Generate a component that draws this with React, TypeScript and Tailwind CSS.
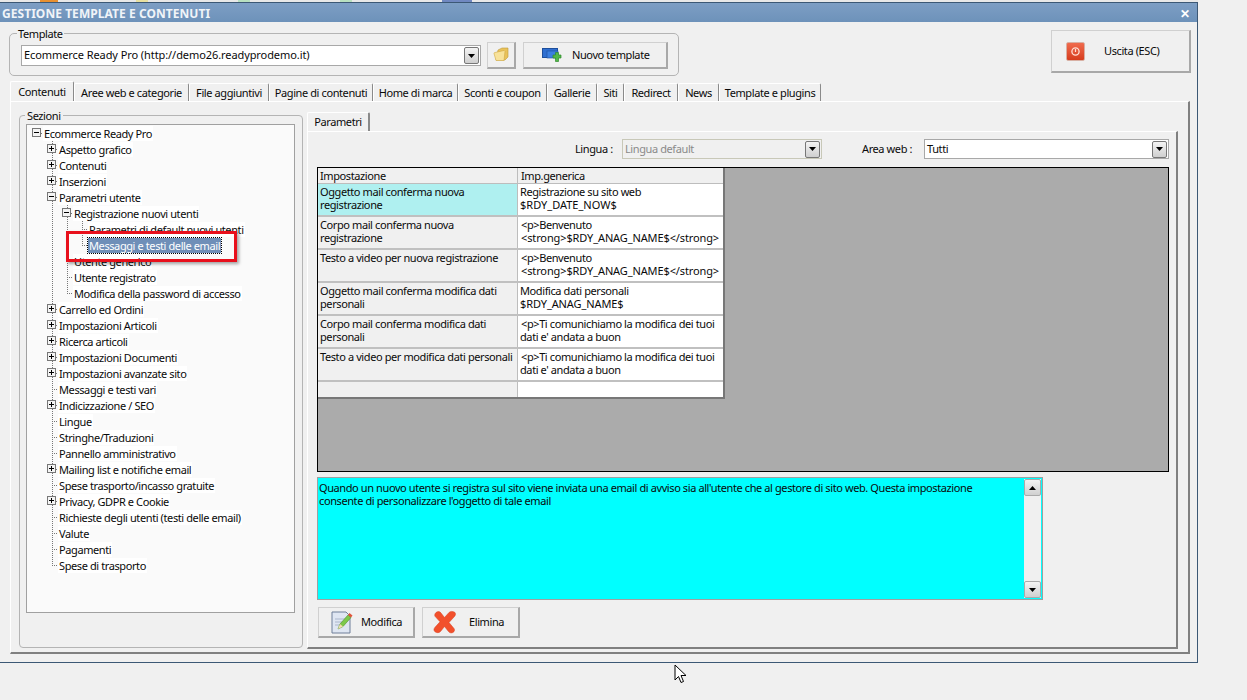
import React from 'react';

type Node = { label: string; lv: number; exp?: 'plus' | 'minus'; g: number[]; last?: boolean };

const rootGuide = [51];
const paramGuide = [51, 66];
const regGuide = [51, 66, 81];

const tree: Node[] = [
  { label: 'Ecommerce Ready Pro', lv: 0, exp: 'minus', g: [] },
  { label: 'Aspetto grafico', lv: 1, exp: 'plus', g: rootGuide },
  { label: 'Contenuti', lv: 1, exp: 'plus', g: rootGuide },
  { label: 'Inserzioni', lv: 1, exp: 'plus', g: rootGuide },
  { label: 'Parametri utente', lv: 1, exp: 'minus', g: rootGuide },
  { label: 'Registrazione nuovi utenti', lv: 2, exp: 'minus', g: paramGuide },
  { label: 'Parametri di default nuovi utenti', lv: 3, g: regGuide },
  { label: 'Messaggi e testi delle email', lv: 3, g: regGuide, last: true },
  { label: 'Utente generico', lv: 2, g: paramGuide },
  { label: 'Utente registrato', lv: 2, g: paramGuide },
  { label: 'Modifica della password di accesso', lv: 2, g: paramGuide, last: true },
  { label: 'Carrello ed Ordini', lv: 1, exp: 'plus', g: rootGuide },
  { label: 'Impostazioni Articoli', lv: 1, exp: 'plus', g: rootGuide },
  { label: 'Ricerca articoli', lv: 1, exp: 'plus', g: rootGuide },
  { label: 'Impostazioni Documenti', lv: 1, exp: 'plus', g: rootGuide },
  { label: 'Impostazioni avanzate sito', lv: 1, exp: 'plus', g: rootGuide },
  { label: 'Messaggi e testi vari', lv: 1, g: rootGuide },
  { label: 'Indicizzazione / SEO', lv: 1, exp: 'plus', g: rootGuide },
  { label: 'Lingue', lv: 1, g: rootGuide },
  { label: 'Stringhe/Traduzioni', lv: 1, g: rootGuide },
  { label: 'Pannello amministrativo', lv: 1, g: rootGuide },
  { label: 'Mailing list e notifiche email', lv: 1, exp: 'plus', g: rootGuide },
  { label: 'Spese trasporto/incasso gratuite', lv: 1, g: rootGuide },
  { label: 'Privacy, GDPR e Cookie', lv: 1, exp: 'plus', g: rootGuide },
  { label: 'Richieste degli utenti (testi delle email)', lv: 1, g: rootGuide },
  { label: 'Valute', lv: 1, g: rootGuide },
  { label: 'Pagamenti', lv: 1, g: rootGuide },
  { label: 'Spese di trasporto', lv: 1, g: rootGuide, last: true },
];

const tabs = [
  { label: 'Contenuti', w: 'w-[64px]' },
  { label: 'Aree web e categorie', w: 'w-[115px]' },
  { label: 'File aggiuntivi', w: 'w-[80px]' },
  { label: 'Pagine di contenuti', w: 'w-[104px]' },
  { label: 'Home di marca', w: 'w-[85px]' },
  { label: 'Sconti e coupon', w: 'w-[89px]' },
  { label: 'Gallerie', w: 'w-[50px]' },
  { label: 'Siti', w: 'w-[27px]' },
  { label: 'Redirect', w: 'w-[54px]' },
  { label: 'News', w: 'w-[41px]' },
  { label: 'Template e plugins', w: 'w-[102px]' },
];

const wideLine = 'tracking-[-0.12px]';

const rows: { a: string; b: React.ReactNode }[] = [
  {
    a: 'Oggetto mail conferma nuova registrazione',
    b: <>Registrazione su sito web<br /><span className="tracking-[0px]">$RDY_DATE_NOW$</span></>,
  },
  {
    a: 'Corpo mail conferma nuova registrazione',
    b: <><span className="ml-px">&lt;p&gt;Benvenuto</span><br /><span className={`ml-px ${wideLine}`}>&lt;strong&gt;$RDY_ANAG_NAME$&lt;/strong&gt;</span></>,
  },
  {
    a: 'Testo a video per nuova registrazione',
    b: <><span className="ml-px">&lt;p&gt;Benvenuto</span><br /><span className={`ml-px ${wideLine}`}>&lt;strong&gt;$RDY_ANAG_NAME$&lt;/strong&gt;</span></>,
  },
  {
    a: 'Oggetto mail conferma modifica dati personali',
    b: <>Modifica dati personali<br /><span className="tracking-[-0.1px]">$RDY_ANAG_NAME$</span></>,
  },
  {
    a: 'Corpo mail conferma modifica dati personali',
    b: <><span className="ml-px">&lt;p&gt;Ti comunichiamo la modifica dei tuoi</span><br />dati e' andata a buon</>,
  },
  {
    a: 'Testo a video per modifica dati personali',
    b: <><span className="ml-px">&lt;p&gt;Ti comunichiamo la modifica dei tuoi</span><br />dati e' andata a buon</>,
  },
];

function TreeRow({ node, index }: { node: Node; index: number }) {
  const textX = 16 + node.lv * 15;
  const boxX = 10 + node.lv * 15;
  // le guide sono in x di pagina, l'albero parte da x=26
  return (
    <div className="relative flex h-[16px] items-center">
      <svg width="110" height="16" className="absolute left-0 top-0">
        {index === 0 && <line x1="25.5" y1="8" x2="25.5" y2="16" stroke="#777" strokeDasharray="1 1" />}
        {node.g.map((x, i) => {
          const isOwn = i === node.g.length - 1;
          return (
            <line
              key={x}
              x1={x - 25.5}
              x2={x - 25.5}
              y1={0}
              y2={isOwn && node.last ? 8 : 16}
              stroke="#777"
              strokeDasharray="1 1"
            />
          );
        })}
        <line x1={boxX} x2={textX} y1="8.5" y2="8.5" stroke="#777" strokeDasharray="1 1" />
        {node.exp && (
          <g>
            <rect x={boxX - 4.5} y="3.5" width="8" height="8" fill="#f4f4f4" stroke="#777" />
            <line x1={boxX - 3} x2={boxX + 2} y1="7.5" y2="7.5" stroke="#000" />
            {node.exp === 'plus' && <line x1={boxX - 0.5} x2={boxX - 0.5} y1="5" y2="10" stroke="#000" />}
          </g>
        )}
      </svg>
      <span
        className={
          node.label === 'Messaggi e testi delle email'
            ? 'relative whitespace-nowrap bg-[#6f8fb8] px-px leading-[15px] text-white outline-1 outline-dotted outline-black'
            : 'relative whitespace-nowrap bg-white px-px leading-[15px] text-[#0a0a0a]'
        }
        style={{ marginLeft: textX }}
      >
        {node.label}
      </span>
    </div>
  );
}

function DropArrow() {
  return (
    <div className="flex h-[17px] w-[15px] items-center justify-center rounded-[2px] border border-[#777] bg-gradient-to-b from-[#f4f4f4] to-[#cfcfcf]">
      <svg width="7" height="4" viewBox="0 0 7 4">
        <path d="M0 0h7L3.5 4z" fill="#000" />
      </svg>
    </div>
  );
}

function Folder() {
  return (
    <svg width="16" height="16" viewBox="0 0 16 16">
      <path d="M5 3l4-2h6v9l-3 3H3z" fill="#e9c25a" stroke="#c09a3a" strokeWidth="0.6" />
      <path d="M1 6.500Q1 5.500 2 5.500l9-2 1 1-1 9H3z" fill="#f8e29a" stroke="#d0a840" strokeWidth="0.6" />
    </svg>
  );
}

function NewTemplate() {
  return (
    <svg width="20" height="15" viewBox="0 0 20 15">
      <rect x="0.5" y="0.5" width="15" height="9" fill="#2f6fd0" stroke="#1e4f9c" />
      <rect x="5" y="3" width="11" height="7" fill="#3b7fe0" stroke="#1e4f9c" strokeWidth="0.6" />
      <path d="M11 7h2.500V4.500h3V7H19v3h-2.500v3.500h-3V10H11z" fill="#52b848" stroke="#2f8a2c" strokeWidth="0.7" />
    </svg>
  );
}

function PowerIcon() {
  return (
    <div className="flex h-[19px] w-[19px] items-center justify-center rounded-[2px] border border-[#d8b0a4] bg-gradient-to-b from-[#f06a4c] to-[#d63c1c]">
      <svg width="11" height="11" viewBox="0 0 11 11">
        <circle cx="5.500" cy="5.500" r="3.600" fill="none" stroke="#ffe0d6" strokeWidth="1.300" />
        <line x1="5.500" y1="3" x2="5.500" y2="6" stroke="#ffe0d6" strokeWidth="1.200" />
      </svg>
    </div>
  );
}

function EditIcon() {
  return (
    <svg width="22" height="23" viewBox="0 0 22 23">
      <path d="M1 1h14l4 4v17H1z" fill="#dfe6f2" stroke="#6f7f99" />
      <path d="M4 8h11M4 11h8M4 14h6" stroke="#aab6cc" />
      <path d="M7 18l2-5 8-9 3 2.500-8 9z" fill="#7dc94a" stroke="#4f8f2c" strokeWidth="0.6" />
      <path d="M17 4l1.500-2 3 2.500-1.500 2z" fill="#e0553a" />
      <path d="M7 18l2-5 3 2.500z" fill="#f3dcb0" />
    </svg>
  );
}

function DeleteIcon() {
  return (
    <svg width="24" height="24" viewBox="0 0 24 24">
      <path
        d="M3 2.500c2-1.500 4-1 5 .5l3.500 4.500L16 2.500c1.500-1.500 4-1.500 6 0 1 1.500.5 3-1 4.500l-5 5.500 5 6c1 1.500.5 3-1 4-2 .8-3.500.3-4.500-1l-4-5-4 5c-1.500 1.500-3.500 1.500-5.500.3-1.500-1.300-1.300-3 0-4.500l5-5.500-5-5.500C1.500 5.500 1.500 4 3 2.500z"
        fill="#f2502c"
        stroke="#d83c1a"
        strokeWidth="0.5"
      />
    </svg>
  );
}

function CursorIcon() {
  return (
    <svg width="14" height="20" viewBox="0 0 14 20">
      <path d="M1 1v15l3.500-3.500 2.500 6 2.500-1-2.500-6h5z" fill="#fff" stroke="#000" strokeWidth="1" />
    </svg>
  );
}

function FlatButton({ className, children }: { className: string; children: React.ReactNode }) {
  return (
    <div
      className={`flex items-center border border-t-[#d0d0d0] border-l-[#d0d0d0] border-r-2 border-b-2 border-r-[#a8a8a8] border-b-[#a8a8a8] bg-[#f0f0f0] ${className}`}
    >
      {children}
    </div>
  );
}

export default function App() {
  return (
    <div className="relative h-[700px] w-[1247px] overflow-hidden bg-[#f0f0f0] text-[11px] tracking-[-0.4px] text-[#0a0a0a] font-['Noto_Sans',sans-serif]">
      {/* striscia in alto */}
      <div className="flex h-[2px] w-[1198px] bg-[#e8e8e8]">
        <div className="ml-[40px] w-[18px] bg-[#e89030]" />
        <div className="ml-[78px] w-[12px] bg-[#e8e0a0]" />
        <div className="ml-[90px] w-[12px] bg-[#b8e0c0]" />
        <div className="ml-[90px] w-[12px] bg-[#b8e0c0]" />
        <div className="ml-[90px] w-[30px] bg-[#7088c0]" />
      </div>

      {/* finestra */}
      <div className="flex h-[661px] w-[1198px] flex-col border-t border-r border-b border-[#3c5875] bg-[#f0f0f0]">
        <div className="flex h-[19px] items-center justify-between bg-gradient-to-b from-[#7d9ec4] to-[#6d92ba] pl-[2px] pr-[7px] pt-[2px]">
          <span className="text-[12px] font-bold tracking-[0.05px] text-[#f0f4f8]">GESTIONE TEMPLATE E CONTENUTI</span>
          <span className="text-[12px] font-bold leading-none text-white">✕</span>
        </div>

        <div className="flex items-start justify-between pl-[9px] pr-[6px] pt-[5px]">
          <fieldset className="h-[49px] w-[670px] rounded-[5px] border border-[#b4b4b4] pl-[11px]">
            <legend className="ml-[-4px] px-[1px] leading-[13px]">Template</legend>
            <div className="flex items-center pt-[2px]">
              <div className="flex h-[21px] w-[460px] items-center justify-between border border-[#a8a8a8] bg-white pl-[2px] pr-[1px]">
                <span className="tracking-[-0.08px]">Ecommerce Ready Pro (http://demo26.readyprodemo.it)</span>
                <DropArrow />
              </div>
              <FlatButton className="ml-[6px] h-[27px] w-[29px] justify-center">
                <Folder />
              </FlatButton>
              <FlatButton className="ml-[7px] h-[27px] w-[145px] pl-[18px]">
                <NewTemplate />
                <span className="ml-[10px] pt-[1px]">Nuovo template</span>
              </FlatButton>
            </div>
          </fieldset>
          <FlatButton className="mt-[3px] h-[43px] w-[140px] pl-[14px]">
            <PowerIcon />
            <span className="ml-[19px] pt-[1px]">Uscita (ESC)</span>
          </FlatButton>
        </div>

        {/* tab principali */}
        <div className="ml-[10px] mt-[5px] flex h-[20px] items-end">
          {tabs.map((t, i) => (
            <div
              key={t.label}
              className={`${t.w} flex items-center justify-center whitespace-nowrap rounded-t-[2px] border-t border-l border-r border-t-white border-l-white border-r-[#8a8a8a] pt-[1px] ${i === 0 ? 'h-[20px]' : 'h-[18px]'}`}
            >
              {t.label}
            </div>
          ))}
        </div>

        <div className="ml-[10px] flex h-[553px] w-[1180px] border-t border-l border-r-2 border-b-2 border-t-white border-l-white border-r-[#808080] border-b-[#808080] pl-[8px] pt-[7px]">
          <fieldset className="h-[539px] w-[284px] rounded-[4px] border border-[#b4b4b4] px-[6px]">
            <legend className="ml-[-1px] px-[2px] leading-[13px]">Sezioni</legend>
            <div className="mt-[2px] h-[489px] w-[269px] border border-[#a0a0a0] bg-[#fafafa]">
              {tree.map((n, i) => (
                <TreeRow key={n.label} node={n} index={i} />
              ))}
            </div>
          </fieldset>

          <div className="ml-[4px] mt-[3px] flex flex-col">
            <div className="flex h-[19px] w-[63px] items-center justify-center rounded-t-[2px] border-t border-l border-r-2 border-t-white border-l-white border-r-[#8a8a8a]">
              Parametri
            </div>
            <div className="h-[518px] w-[871px] border-t border-l border-r-2 border-b-2 border-t-white border-l-white border-r-[#808080] border-b-[#808080] pl-[9px] pt-[7px]">
              <div className="flex h-[20px] items-center">
                <span className="ml-[258px] w-[47px] whitespace-nowrap">Lingua :</span>
                <div className="flex h-[20px] w-[200px] items-center justify-between border border-[#c8c8b8] bg-[#f0f0f0] pl-[2px] pr-px text-[#8a8a8a]">
                  <span>Lingua default</span>
                  <DropArrow />
                </div>
                <span className="ml-[40px] w-[62px] whitespace-nowrap">Area web :</span>
                <div className="flex h-[20px] w-[245px] items-center justify-between border border-[#a8a8a8] bg-white pl-[2px] pr-px">
                  <span>Tutti</span>
                  <DropArrow />
                </div>
              </div>

              {/* griglia impostazioni */}
              <div className="mt-[8px] h-[305px] w-[852px] border border-black bg-[#ababab]">
                <div className="w-[407px] border-r-2 border-b-2 border-r-[#777] border-b-[#777]">
                  <div className="grid h-[16px] grid-cols-[200px_205px] border-b border-[#bdbdbd] bg-[#f0f0f0]">
                    <div className="border-r border-[#bdbdbd] pl-[2px] leading-[15px]">Impostazione</div>
                    <div className="pl-[3px] leading-[15px]">Imp.generica</div>
                  </div>
                  {rows.map((r, i) => (
                    <div key={i} className="grid h-[33px] grid-cols-[200px_205px] border-b-2 border-[#c0c0c0]">
                      <div className={`${i === 0 ? 'bg-[#aff0f0]' : 'bg-[#f0f0f0]'} border-r border-[#bdbdbd] pl-[2px] pt-[1px] leading-[13px]`}>
                        {r.a}
                      </div>
                      <div className="whitespace-nowrap bg-white pl-[2px] pt-[1px] leading-[13px]">{r.b}</div>
                    </div>
                  ))}
                  <div className="grid h-[15px] grid-cols-[200px_205px]">
                    <div className="border-r border-[#bdbdbd] bg-[#f0f0f0]" />
                    <div className="bg-white" />
                  </div>
                </div>
              </div>

              {/* descrizione */}
              <div className="mt-[5px] flex h-[123px] w-[726px] border border-[#a0a0a0] bg-[#00ffff] pr-px">
                <div className="min-w-0 flex-1 whitespace-nowrap pl-[1px] pt-[3px] leading-[13px]">
                  Quando un nuovo utente si registra sul sito viene inviata una email di avviso sia all'utente che al gestore di sito web. Questa impostazione
                  <br />
                  consente di personalizzare l'oggetto di tale email
                </div>
                <div className="my-[1px] flex w-[17px] shrink-0 flex-col justify-between bg-[#f0f0f0]">
                  <div className="flex h-[17px] items-center justify-center rounded-[2px] border border-[#aaa] bg-gradient-to-b from-[#f4f4f4] to-[#d0d0d0]">
                    <svg width="7" height="4" viewBox="0 0 7 4"><path d="M0 4h7L3.500 0z" fill="#000" /></svg>
                  </div>
                  <div className="flex h-[17px] items-center justify-center rounded-[2px] border border-[#aaa] bg-gradient-to-b from-[#f4f4f4] to-[#d0d0d0]">
                    <svg width="7" height="4" viewBox="0 0 7 4"><path d="M0 0h7L3.500 4z" fill="#000" /></svg>
                  </div>
                </div>
              </div>

              <div className="mt-[7px] flex">
                <FlatButton className="ml-px h-[31px] w-[97px] pl-[12px]">
                  <EditIcon />
                  <span className="ml-[8px] pt-[1px]">Modifica</span>
                </FlatButton>
                <FlatButton className="ml-[7px] h-[31px] w-[98px] pl-[10px]">
                  <DeleteIcon />
                  <span className="ml-[12px] pt-[1px]">Elimina</span>
                </FlatButton>
              </div>
            </div>
          </div>
        </div>
      </div>

      {/* riquadro rosso di evidenziazione */}
      <div className="absolute left-[66px] top-[231px] h-[31px] w-[171px] border-[3px] border-[#e8101c] shadow-[2px_2px_3px_rgba(0,0,0,0.35)]" />
      <div className="absolute left-[674px] top-[664px]">
        <CursorIcon />
      </div>
    </div>
  );
}
